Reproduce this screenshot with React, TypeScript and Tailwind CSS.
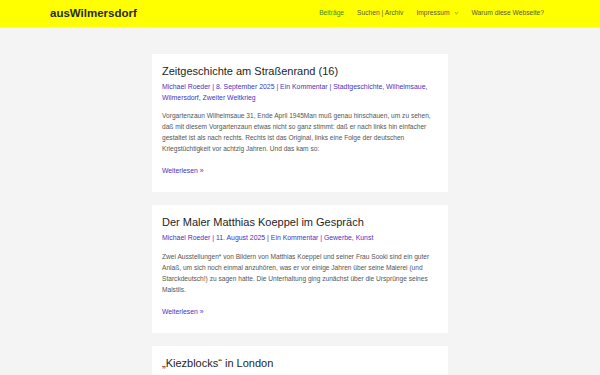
import React from "react";

const LINK = "text-[#4533c4]";

function Card({
  title,
  meta,
  body,
  more = true,
}: {
  title: string;
  meta?: React.ReactNode;
  body?: string;
  more?: boolean;
}) {
  return (
    <article className="w-[296px] bg-white px-[10px] pt-[10px] pb-[16px]">
      <h2 className="text-[11px] leading-[14px] text-[#1e1e1e]">{title}</h2>
      {meta && (
        <div className={`mt-[4px] text-[6.9px] leading-[10.7px] ${LINK}`}>{meta}</div>
      )}
      {body && (
        <p className="mt-[7px] text-[6.6px] leading-[11px] text-[#555555]">{body}</p>
      )}
      {more && (
        <div className={`mt-[11px] text-[6.8px] leading-[11px] ${LINK}`}>Weiterlesen »</div>
      )}
    </article>
  );
}

export default function App() {
  return (
    <div
      className="min-h-screen w-full bg-[#f4f4f4]"
      style={{ fontFamily: '"Liberation Sans", Arial, sans-serif' }}
    >
      <header className="flex h-[27px] items-center bg-[#ffff00] pl-[50px] pr-[56px]">
        <div className="text-[11.5px] font-bold text-[#2a2a2a]">ausWilmersdorf</div>
        <nav className="ml-auto flex items-center gap-[13px] text-[6.7px] text-[#5a5a3a]">
          <span className="text-[#4a8a2c]">Beiträge</span>
          <span>Suchen | Archiv</span>
          <span className="flex items-center">
            Impressum
            <svg className="ml-[4px]" width="5" height="4" viewBox="0 0 5 4" fill="none">
              <path d="M0.8 1.2 L2.5 2.8 L4.2 1.2" stroke="#6a6a3a" strokeWidth="0.7" />
            </svg>
          </span>
          <span>Warum diese Webseite?</span>
        </nav>
      </header>
      <main className="flex flex-col items-center gap-[13px] pt-[27px]">
        <Card
          title="Zeitgeschichte am Straßenrand (16)"
          meta={
            <>
              Michael Roeder | 8. September 2025 | Ein Kommentar | Stadtgeschichte, Wilhelmsaue,
              Wilmersdorf, Zweiter Weltkrieg
            </>
          }
          body="Vorgartenzaun Wilhelmsaue 31, Ende April 1945Man muß genau hinschauen, um zu sehen, daß mit diesem Vorgartenzaun etwas nicht so ganz stimmt: daß er nach links hin einfacher gestaltet ist als nach rechts. Rechts ist das Original, links eine Folge der deutschen Kriegstüchtigkeit vor achtzig Jahren. Und das kam so:"
        />
        <Card
          title="Der Maler Matthias Koeppel im Gespräch"
          meta={<>Michael Roeder | 11. August 2025 | Ein Kommentar | Gewerbe, Kunst</>}
          body="Zwei Ausstellungen* von Bildern von Matthias Koeppel und seiner Frau Sooki sind ein guter Anlaß, um sich noch einmal anzuhören, was er vor einige Jahren über seine Malerei (und Starckdeutsch!) zu sagen hatte. Die Unterhaltung ging zunächst über die Ursprünge seines Malstils."
        />
        <Card title="„Kiezblocks“ in London" more={false} />
      </main>
    </div>
  );
}
